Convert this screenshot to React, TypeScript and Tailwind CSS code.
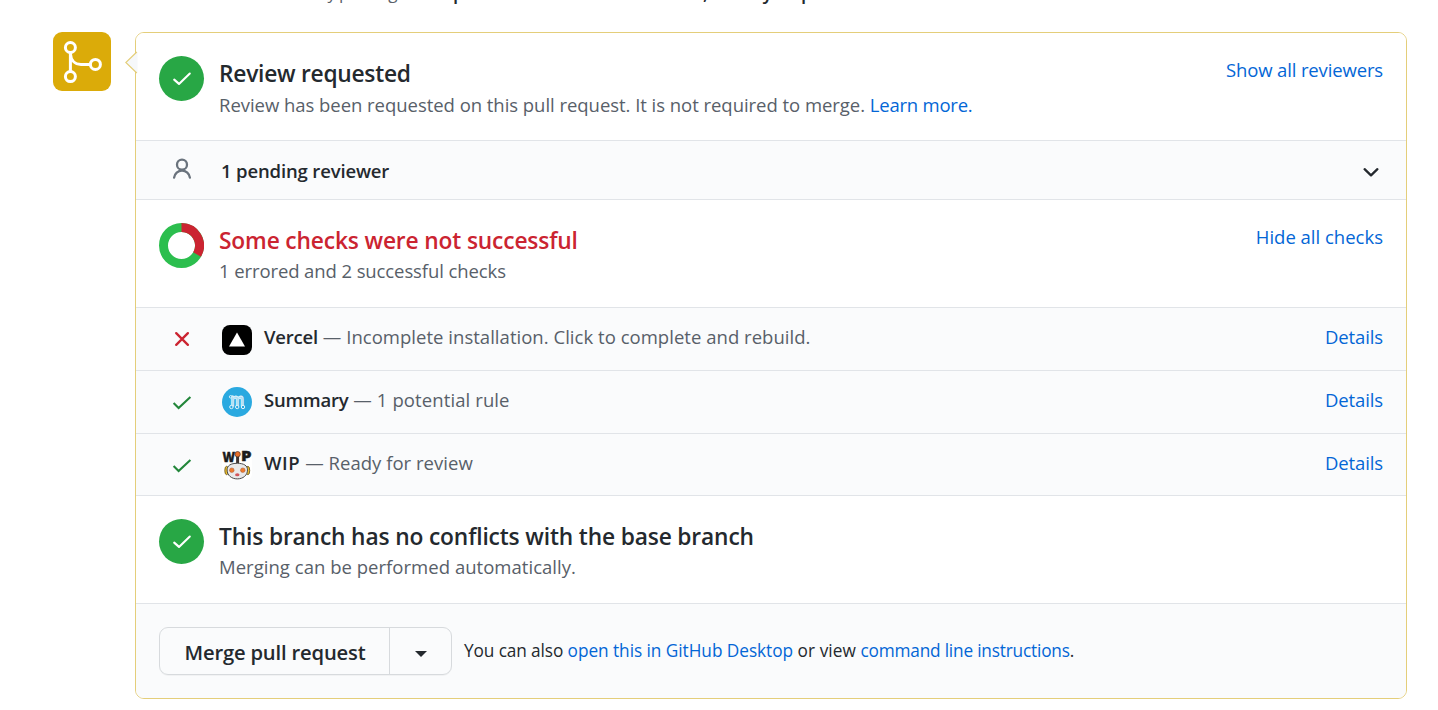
import type { ReactNode } from "react";

function StatusCircle() {
  return (
    <div className="flex size-[45px] shrink-0 items-center justify-center rounded-full bg-[#28a745]">
      <svg className="mt-px" width="20" height="16" viewBox="0 0 20 16" fill="none" stroke="#fff" strokeWidth="2.1" strokeLinecap="round" strokeLinejoin="round">
        <path d="M2.200 8.600 7 12.900 17.800 2.500" />
      </svg>
    </div>
  );
}

function StatusDonut() {
  return (
    <svg className="shrink-0" width="45" height="45" viewBox="0 0 45 45" fill="none" strokeWidth="9">
      <circle cx="22.5" cy="22.5" r="18" stroke="#2cbe4e" />
      <path d="M22.5 4.5A18 18 0 0 1 38.09 31.5" stroke="#cb2431" />
    </svg>
  );
}

function MergeIcon() {
  return (
    <svg width="58" height="59" viewBox="0 0 58 59" fill="none" stroke="#fff" strokeWidth="3">
      <circle cx="17.4" cy="15.5" r="5" />
      <circle cx="17.4" cy="44.6" r="5" />
      <circle cx="42.4" cy="32.4" r="5" />
      <path d="M17.4 20.500v19M17.400 21.500c.4 6.300 4 10.900 10.600 10.900h9.200" />
    </svg>
  );
}

function CheckIcon() {
  return (
    <svg className="mt-px" width="20" height="16" viewBox="0 0 20 16" fill="none" stroke="#22863a" strokeWidth="2.1">
      <path d="M1.600 8.100 6.600 13.100 18.400 1.900" />
    </svg>
  );
}

function CrossIcon() {
  return (
    <svg width="20" height="16" viewBox="0 0 20 16" fill="none" stroke="#cb2431" strokeWidth="2.300" strokeLinecap="round">
      <path d="M4.200 2.100 15.900 13.900M15.900 2.100 4.200 13.900" />
    </svg>
  );
}

function PersonIcon() {
  return (
    <svg width="20" height="22" viewBox="0 0 20 22" fill="none" stroke="#6a737d" strokeWidth="2.300" strokeLinecap="round">
      <circle cx="10" cy="6.700" r="5" />
      <path d="M2.100 19.600a7.950 7.950 0 0 1 15.800 0" />
    </svg>
  );
}

function VercelAvatar() {
  return (
    <svg width="30" height="30" viewBox="0 0 30 30">
      <rect width="30" height="30" rx="8" fill="#000" />
      <path d="M15 7.600 23 21.600H7z" fill="#fff" />
    </svg>
  );
}

function SummaryAvatar() {
  return (
    <svg width="30" height="30" viewBox="0 0 30 30" fill="none" stroke="#e4f5fd" strokeWidth="1">
      <circle cx="15" cy="15" r="15" fill="#2aa9e0" stroke="none" />
      <text x="8.300" y="18.500" fontFamily="Open Sans, sans-serif" fontWeight="700" fontSize="17" textLength="14" lengthAdjust="spacingAndGlyphs" fill="#a9dcf4" strokeWidth=".8">
        m
      </text>
      <circle cx="8.600" cy="9.800" r="1.200" fill="#2aa9e0" />
      <circle cx="9.400" cy="20" r="1.700" fill="#2aa9e0" />
      <circle cx="15.200" cy="20" r="1.700" fill="#2aa9e0" />
      <circle cx="21" cy="20" r="1.700" fill="#2aa9e0" />
    </svg>
  );
}

function WipAvatar() {
  return (
    <svg width="30" height="30" viewBox="0 0 30 30">
      <rect width="30" height="30" rx="6" fill="#fff" />
      <path d="M15.600 5v8" stroke="#3d3330" strokeWidth="3" />
      <g fill="#1c1c1c" stroke="#1c1c1c" strokeWidth=".4" fontFamily="Open Sans, sans-serif" fontWeight="800" fontSize="13.500">
        <text x="0.500" y="11.800" textLength="12.500" lengthAdjust="spacingAndGlyphs">W</text>
        <text x="19" y="11.200" textLength="10.500" lengthAdjust="spacingAndGlyphs">P</text>
      </g>
      <circle cx="15.600" cy="4.200" r="2.700" fill="#e8702a" stroke="#4a3327" strokeWidth=".7" />
      <ellipse cx="4.600" cy="20.500" rx="1.800" ry="4.200" fill="#efc02c" stroke="#5c4a1c" strokeWidth=".8" />
      <ellipse cx="25.900" cy="20.500" rx="1.800" ry="4.200" fill="#efc02c" stroke="#5c4a1c" strokeWidth=".8" />
      <path d="M15.300 13.300c6.600 0 10.200 2.300 10.200 6.600 0 5.500-4.500 9-10.200 9s-10.200-3.500-10.200-9c0-4.300 3.600-6.600 10.200-6.600z" fill="#e9e9e9" stroke="#4b4b4b" strokeWidth="1" />
      <circle cx="9.800" cy="20.200" r="2.300" fill="#ee7a2e" stroke="#a85a3a" strokeWidth=".5" />
      <circle cx="20.800" cy="20.200" r="2.300" fill="#ee7a2e" stroke="#a85a3a" strokeWidth=".5" />
      <ellipse cx="15.300" cy="24.700" rx="2.200" ry="1.500" fill="#d2555b" />
    </svg>
  );
}

function Link({ className = "", children }: { className?: string; children: ReactNode }) {
  return (
    <a href="#" className={`text-[#0366d6] ${className}`}>
      {children}
    </a>
  );
}

function Section({
  icon,
  title,
  aside,
  textClass = "leading-[24px]",
  children,
}: {
  icon: ReactNode;
  title: ReactNode;
  aside?: ReactNode;
  textClass?: string;
  children: ReactNode;
}) {
  return (
    <section className="flex h-[107px] items-start bg-white pt-[23px] pr-[23px] pl-[23px]">
      {icon}
      <div className="ml-[15px] flex-1">
        <h3 className="text-[22.75px] leading-9 font-semibold tracking-[-0.15px]">{title}</h3>
        <p className={`text-[#586069] ${textClass}`}>{children}</p>
      </div>
      {aside}
    </section>
  );
}

function CheckRow({
  icon,
  avatar,
  name,
  avatarClass = "",
  children,
}: {
  icon: ReactNode;
  avatar: ReactNode;
  name: ReactNode;
  avatarClass?: string;
  children: ReactNode;
}) {
  return (
    <div className="flex h-[63px] items-center border-t border-[#e1e4e8] bg-[#fafbfc] pr-[23px] pl-9">
      <div className="w-[50px]">{icon}</div>
      <div className={`w-[42px] ${avatarClass}`}>{avatar}</div>
      <p className="flex-1 pb-[5px] text-[#586069]">
        {name}
        {children}
      </p>
      <Link className="pb-[5px] tracking-[-0.13px]">Details</Link>
    </div>
  );
}

export default function App() {
  return (
    <div className="h-[710px] w-[1438px] overflow-hidden bg-white font-['Open_Sans',sans-serif] text-[18.5px] text-[#24292e]">
      <div className="flex h-8 overflow-hidden pl-[152px] leading-[24px] whitespace-nowrap">
        <p className="-mt-[19px] flex">
          <span className="w-[166px] text-[#586069]">Add more commits</span>
          <span className="w-[135px] text-[17px] tracking-[-0.8px] text-[#586069]">by pushing to the</span>
          <span className="w-[170px] font-semibold">patch-1 branch on</span>
          <span className="w-[85px] text-right font-semibold">contrib,</span>
          <span className="ml-[16px] font-semibold tracking-[1px]">early-repo</span>
        </p>
      </div>
      <div className="flex items-start pl-[53px]">
        <div className="h-[59px] w-[58px] shrink-0 rounded-[9px] bg-[#dbab09]">
          <MergeIcon />
        </div>
        <div className="relative ml-6 h-[667px] w-[1272px] rounded-[9px] border border-[#e4ce7a]">
          <div className="flex flex-col overflow-hidden rounded-[8px]">
            <Section
              icon={<StatusCircle />}
              title={<span className="tracking-[-0.25px]">Review requested</span>}
              textClass="leading-[26px]"
              aside={<Link className="leading-7 tracking-[-0.14px]">Show all reviewers</Link>}
            >
              <span className="tracking-[-0.04px]">Review has been requested on this pull request. It is not required to merge. </span>
              <Link className="tracking-[-0.22px]">Learn more.</Link>
            </Section>
            <div className="flex h-[59px] items-center border-t border-[#e1e4e8] bg-[#fafbfc] pr-[26px] pl-9">
              <div className="w-[49px] pb-[2px]">
                <PersonIcon />
              </div>
              <p className="flex-1 pt-[2px] font-semibold tracking-[-0.15px]">1 pending reviewer</p>
              <svg className="mt-[4px]" width="18" height="12" viewBox="0 0 18 12" fill="none" stroke="#24292e" strokeWidth="2.300" strokeLinecap="round" strokeLinejoin="round">
                <path d="M2.600 3.200 9 9.400 15.400 3.200" />
              </svg>
            </div>
            <div className="border-t border-[#e1e4e8]">
              <Section
                icon={<StatusDonut />}
                title={<span className="text-[#cb2431]">Some checks were not successful</span>}
                aside={<Link className="leading-7">Hide all checks</Link>}
              >
                <span className="tracking-[-0.1px]">1 errored and 2 successful checks</span>
              </Section>
            </div>
            <CheckRow
              icon={<CrossIcon />}
              avatar={<VercelAvatar />}
              avatarClass="pt-[2px]"
              name={<strong className="font-semibold tracking-[-0.2px] text-[#24292e]">Vercel</strong>}
            >
              <span className="tracking-[0.03px]"> — Incomplete installation. Click to complete and rebuild.</span>
            </CheckRow>
            <CheckRow
              icon={<CheckIcon />}
              avatar={<SummaryAvatar />}
              name={<strong className="font-semibold tracking-[-0.2px] text-[#24292e]">Summary</strong>}
            >
              <span className="tracking-[0.1px]"> — 1 potential rule</span>
            </CheckRow>
            <CheckRow
              icon={<CheckIcon />}
              avatar={<WipAvatar />}
              name={<strong className="font-semibold tracking-[0.6px] text-[#24292e]">WIP</strong>}
            >
              <span className="tracking-[0.03px]"> — Ready for review</span>
            </CheckRow>
            <div className="-mt-px border-t border-[#e1e4e8]">
              <Section icon={<StatusCircle />} title="This branch has no conflicts with the base branch">
                <span className="tracking-[0.03px]">Merging can be performed automatically.</span>
              </Section>
            </div>
            <div className="flex h-[95px] items-center border-t border-[#e1e4e8] bg-[#fafbfc] pl-[23px]">
              <div className="flex h-12 rounded-[9px] border border-[#d7dadd] shadow-[0_1px_0_rgba(27,31,35,0.04)]">
                <button className="w-[229px] pt-[2px] pl-px text-[20.2px] font-semibold tracking-[-0.17px]">Merge pull request</button>
                <button className="flex w-[62px] items-center justify-center border-l border-[#d7dadd] pt-[5px]">
                  <svg width="12" height="6" viewBox="0 0 12 6" fill="#24292e">
                    <path d="M0 0h12L6 6z" />
                  </svg>
                </button>
              </div>
              <p className="ml-3 text-[17.25px]">
                <span className="tracking-[-0.11px]">You can also </span>
                <Link className="tracking-[-0.05px]">open this in GitHub Desktop</Link>
                <span className="tracking-[0.05px]"> or view </span>
                <Link className="tracking-[-0.19px]">command line instructions</Link>.
              </p>
            </div>
          </div>
          <svg className="absolute top-[18px] -left-[11px]" width="13" height="23" viewBox="0 0 13 23">
            <path d="M12.500.5.800 11.500 12.500 22.500z" fill="#f6f8fa" />
            <path d="M11.800 1 .800 11.500 11.800 22" fill="none" stroke="#e4ce7a" strokeWidth="1.200" />
          </svg>
        </div>
      </div>
    </div>
  );
}
